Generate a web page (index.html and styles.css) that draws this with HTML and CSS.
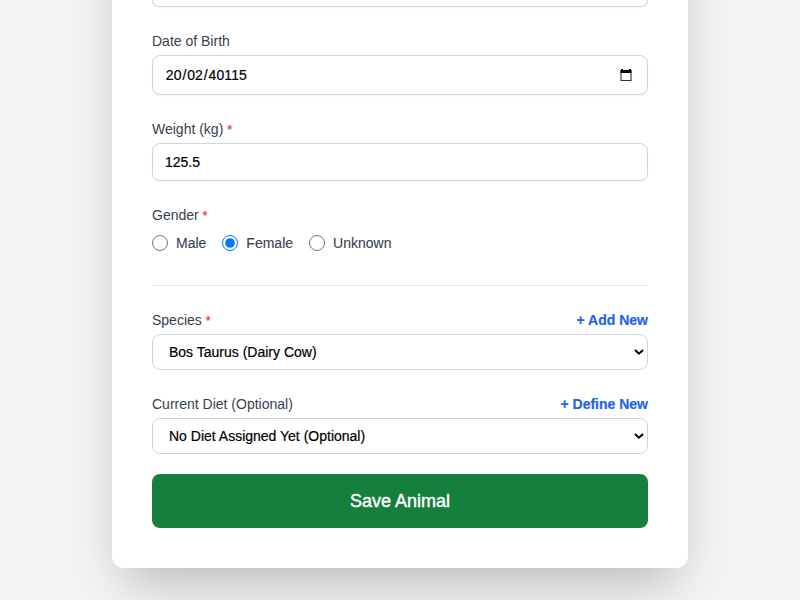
FILE: index.html
```html
<!DOCTYPE html>
<html lang="en">
<head>
<meta charset="utf-8">
<title>Animal</title>
<link rel="stylesheet" href="styles.css">
</head>
<body>
<main class="page">
<form class="card">
  <div class="box prev"></div>
  <label class="label">Date of Birth</label>
  <div class="box date"><span class="dob"><span>20</span>/<span>02</span>/<span>40115</span></span>
    <svg class="cal" width="14" height="14" viewBox="0 0 14 14"><path fill="#000" d="M2 1h2v1h6V1h2v1h.6v3H1.4V2H2z"/><path fill="none" stroke="#333" stroke-width="1.1" d="M2 4.5V12.5H12V4.5"/></svg>
  </div>
  <label class="label">Weight (kg) <span class="req">*</span></label>
  <div class="box weight"><span>125.5</span></div>
  <label class="label">Gender <span class="req">*</span></label>
  <div class="radios">
    <label class="radio"><input type="radio" name="g"><span class="male">Male</span></label>
    <label class="radio"><input type="radio" name="g" checked><span class="female">Female</span></label>
    <label class="radio"><input type="radio" name="g"><span class="unknown">Unknown</span></label>
  </div>
  <hr class="rule">
  <div class="row"><label class="label">Species <span class="req">*</span></label><a class="link add">+ Add New</a></div>
  <div class="box select"><span class="species">Bos Taurus (Dairy Cow)</span>
    <svg class="chev" width="10" height="8" viewBox="0 0 10 8"><path d="M1 2l4 3.7L9 2" fill="none" stroke="#000" stroke-width="2"/></svg></div>
  <div class="row diet-row"><label class="label">Current Diet (Optional)</label><a class="link define">+ Define New</a></div>
  <div class="box select"><span class="diet">No Diet Assigned Yet (Optional)</span>
    <svg class="chev" width="10" height="8" viewBox="0 0 10 8"><path d="M1 2l4 3.7L9 2" fill="none" stroke="#000" stroke-width="2"/></svg></div>
  <button type="button" class="save">Save Animal</button>
</form>
</main>
</body>
</html>
```
FILE: styles.css
```css
* { box-sizing: border-box; }
body { margin: 0; background: #f3f4f6; font-family: "Liberation Sans", Arial, sans-serif; font-size: 14px; line-height: 20px; color: #000; }
.page { height: 600px; overflow: hidden; display: flex; justify-content: center; align-items: flex-start; }
.card { width: 576px; height: 768px; margin-top: -200px; padding: 200px 40px 0; background: #fff; border-radius: 12px; box-shadow: 0 25px 50px -12px rgba(0,0,0,.25); display: flex; flex-direction: column; }
.box { flex: none; display: flex; align-items: center; justify-content: space-between; border: 1px solid #d1d5db; border-radius: 8px; background: #fff; box-shadow: 0 1px 2px rgba(0,0,0,.05); padding: 0 12px; white-space: nowrap; -webkit-text-stroke: .2px; }
.prev { height: 7px; border-top: 0; border-radius: 0 0 8px 8px; margin-bottom: 24px; }
.label { display: block; color: #374151; height: 20px; margin-bottom: 4px; white-space: nowrap; }
.req { color: #ef4444; font-size: 12.5px; line-height: 1; -webkit-text-stroke: .3px; }
.date { height: 40px; margin-bottom: 24px; padding: 0 14px 0 12px; }
.dob { letter-spacing: .1px; }
.dob span { padding: 0 .8px; }
.weight { height: 38px; margin-bottom: 24px; }
.radios { display: flex; gap: 16px; height: 20px; margin: 4px 0 32px; }
.radio { display: flex; align-items: center; gap: 8px; color: #374151; -webkit-text-stroke: .1px; }
.radio input { width: 16px; height: 16px; margin: 0; accent-color: #0075ff; }
.rule { width: 100%; flex: none; height: 1px; margin: 0 0 24px; border: 0; background: #e5e7eb; }
.row { display: flex; justify-content: space-between; height: 24px; }
.diet-row { margin-top: 24px; }
.link { font-weight: 700; color: #2563eb; white-space: nowrap; -webkit-text-stroke: .2px; }
.select { height: 36px; padding: 0 3px 0 16px; box-shadow: none; }
.save { flex: none; height: 54px; margin-top: 20px; border: 0; border-radius: 8px; background: #15803d; color: #fff; font: 18px/28px "Liberation Sans", Arial, sans-serif; -webkit-text-stroke: .4px; }
```
